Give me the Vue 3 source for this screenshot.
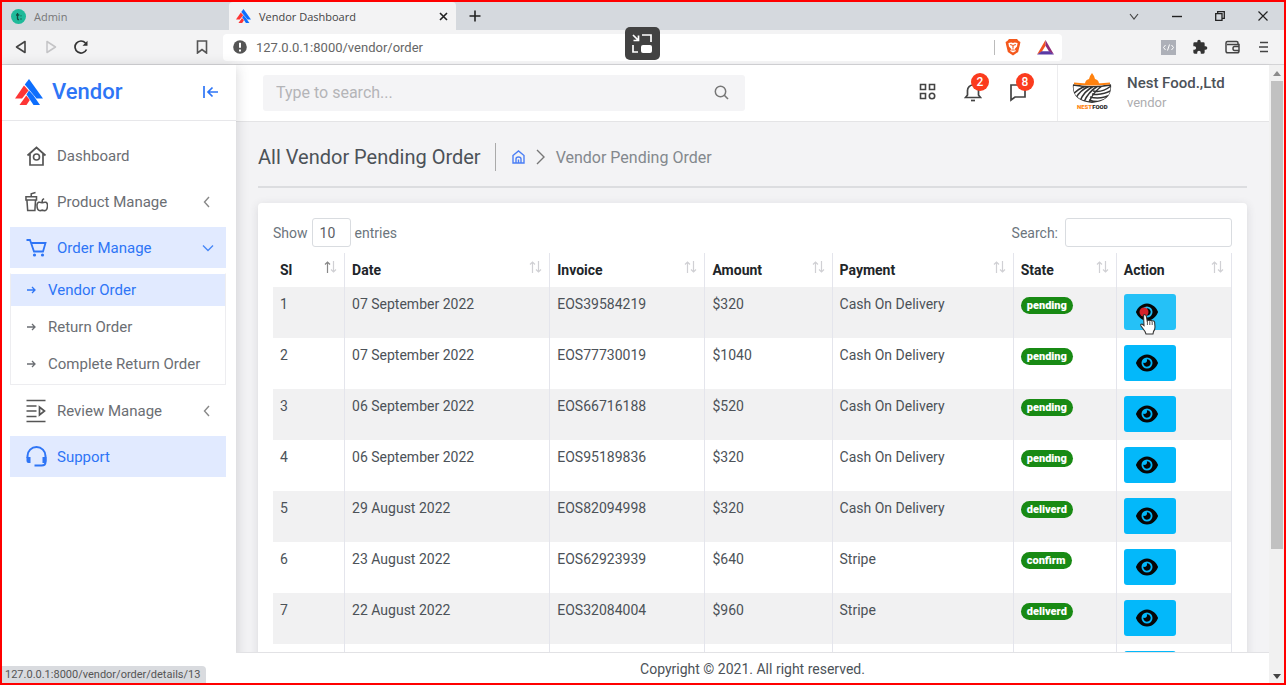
<script setup>
import { ref } from 'vue'

const query = ref('')
const filter = ref('')
const pageSize = ref('10')
const url = ref('127.0.0.1:8000/vendor/order')

const columns = [
  { label: 'Sl', width: 72 },
  { label: 'Date', width: 205 },
  { label: 'Invoice', width: 155 },
  { label: 'Amount', width: 127 },
  { label: 'Payment', width: 181 },
  { label: 'State', width: 103 },
  { label: 'Action', width: 115 }
]
const total = columns.reduce((sum, c) => sum + c.width, 0)

const orders = [
  { date: '07 September 2022', invoice: 'EOS39584219', amount: '$320', payment: 'Cash On Delivery', state: 'pending' },
  { date: '07 September 2022', invoice: 'EOS77730019', amount: '$1040', payment: 'Cash On Delivery', state: 'pending' },
  { date: '06 September 2022', invoice: 'EOS66716188', amount: '$520', payment: 'Cash On Delivery', state: 'pending' },
  { date: '06 September 2022', invoice: 'EOS95189836', amount: '$320', payment: 'Cash On Delivery', state: 'pending' },
  { date: '29 August 2022', invoice: 'EOS82094998', amount: '$320', payment: 'Cash On Delivery', state: 'deliverd' },
  { date: '23 August 2022', invoice: 'EOS62923939', amount: '$640', payment: 'Stripe', state: 'confirm' },
  { date: '22 August 2022', invoice: 'EOS32084004', amount: '$960', payment: 'Stripe', state: 'deliverd' },
  { date: '', invoice: '', amount: '', payment: '', state: '' }
]
</script>

<template>
  <div class="window">
    <svg class="defs" width="0" height="0" aria-hidden="true">
      <symbol id="brand" viewBox="0 0 28 26">
        <path fill="#0d6efd" d="M14 0 28 19.500H21.500L9.800 5.500Z" />
        <path fill="#0d6efd" d="M14 11.500 18.500 16.500 25 26H18.500L11.500 15.500Z" />
        <path fill="#fd3535" d="M9 6.500 13.500 11.500 7 19.500H0Z" />
        <path fill="#fd3535" d="M11.300 16.500 14.800 21 11.500 26H4.500Z" />
      </symbol>
      <symbol id="eye" viewBox="0 0 576 512">
        <path fill="#060606" d="M288 32c-80.800 0-145.500 36.800-192.600 80.600C48.600 156 17.300 208 2.500 243.700c-3.300 7.900-3.300 16.700 0 24.600C17.300 304 48.600 356 95.400 399.400C142.500 443.200 207.200 480 288 480s145.500-36.800 192.600-80.600c46.800-43.500 78.100-95.400 93-131.100c3.300-7.900 3.300-16.700 0-24.600c-14.900-35.700-46.200-87.700-93-131.100C433.500 68.800 368.800 32 288 32zM144 256a144 144 0 1 1 288 0 144 144 0 1 1 -288 0zm144-64c0 35.300-28.700 64-64 64c-7.100 0-13.900-1.200-20.300-3.300c-5.500-1.800-11.900 1.600-11.700 7.400c.3 6.900 1.300 13.800 3.200 20.700c13.700 51.200 66.400 81.600 117.600 67.900s81.600-66.400 67.900-117.600c-11.100-41.500-47.800-69.400-88.600-71.100c-5.800-.2-9.200 6.100-7.400 11.700c2.100 6.400 3.300 13.200 3.300 20.300z" />
      </symbol>
    </svg>

    <div class="tabs">
      <button class="tab">
        <svg width="15" height="15" viewBox="0 0 15 15"><circle cx="7.500" cy="7.500" r="7.500" fill="#1fba9a" /><path d="M6.500 4v5.500q0 1.300 1.500 1M5 6h3.300M10 6.500v.8M10 9.500v1" fill="none" stroke="#124b40" stroke-width="1.300" /></svg>
        <span>Admin</span>
      </button>
      <button class="tab current">
        <svg width="15" height="14"><use href="#brand" /></svg>
        <span>Vendor Dashboard</span>
        <svg class="close" width="9" height="9" viewBox="0 0 9 9"><path d="M1 1l7 7M8 1 1 8" stroke="#222" stroke-width="1.600" /></svg>
      </button>
      <button class="plus" aria-label="New tab"><svg width="12" height="12" viewBox="0 0 12 12"><path d="M6 .5v11M.5 6h11" stroke="#222" stroke-width="1.600" /></svg></button>
      <div class="controls">
        <button aria-label="Search tabs"><svg width="10" height="7" viewBox="0 0 10 7"><path d="M1 1l4 5 4-5" fill="none" stroke="#444" stroke-width="1.200" /></svg></button>
        <button aria-label="Minimize"><svg width="10" height="10" viewBox="0 0 10 10"><path d="M0 5.500h10" stroke="#222" stroke-width="1.400" /></svg></button>
        <button aria-label="Restore"><svg width="10" height="10" viewBox="0 0 10 10"><path d="M.7 2.700h6.300v6.600H.7zM2.700 2.500V.7h6.600v6.600H7" fill="none" stroke="#222" stroke-width="1.300" /></svg></button>
        <button aria-label="Close"><svg width="10" height="10" viewBox="0 0 10 10"><path d="M.5.5l9 9M9.500.5l-9 9" stroke="#222" stroke-width="1.200" /></svg></button>
      </div>
    </div>

    <div class="toolbar">
      <div class="history">
        <button aria-label="Back"><svg width="12" height="14" viewBox="0 0 12 14"><path d="M10 1.500v11L1.500 7Z" fill="none" stroke="#444" stroke-width="1.600" stroke-linejoin="round" /></svg></button>
        <button aria-label="Forward"><svg width="12" height="14" viewBox="0 0 12 14"><path d="M2 1.500v11L10.500 7Z" fill="none" stroke="#c4c4c6" stroke-width="1.500" stroke-linejoin="round" /></svg></button>
        <button aria-label="Reload"><svg width="14" height="14" viewBox="0 0 14 14"><path d="M12.500 9.500A6 6 0 1 1 11.500 3" fill="none" stroke="#333" stroke-width="1.700" /><path d="M13.500.8v5H8.500Z" fill="#333" /></svg></button>
      </div>
      <button class="bookmark" aria-label="Bookmark"><svg width="12" height="14" viewBox="0 0 12 14"><path d="M1.500 1h9v12L6 9.500 1.500 13Z" fill="none" stroke="#555" stroke-width="1.600" /></svg></button>
      <div class="address">
        <svg width="14" height="14" viewBox="0 0 14 14"><circle cx="7" cy="7" r="6.800" fill="#555" /><path d="M7 2.800v5M7 9.500v2" stroke="#fff" stroke-width="2" /></svg>
        <input v-model="url" aria-label="Address">
        <span class="rule"></span>
        <svg width="16" height="18" viewBox="0 0 14 18" preserveAspectRatio="none"><path d="M3.500 1h7l1.500 2 1.500 1-.5 3-1.500 7L7 17.500 2.500 14 1 7 .5 4 2 3Z" fill="#f4581c" /><path d="M3 5l2.500-.5L7 5l1.500-.5L11 5l-.5 3.500L8.500 11 9.500 13 7 14.500 4.500 13l1-2L3.500 8.500Z" fill="#fff" /><path d="M4.500 6.500l2 .8M9.500 6.500l-2 .8M7 7v3.500M5.500 12h3" stroke="#f4581c" fill="none" /></svg>
        <svg width="17" height="15" viewBox="0 0 18 16"><path d="M9 0 0 15.500 5 12.500 9 6Z" fill="#f4501f" /><path d="M9 0l9 15.500L13 12.500 9 6Z" fill="#8f2b78" /><path d="M0 15.500h18L13 12H5Z" fill="#5a3aa5" /></svg>
      </div>
      <div class="extras">
        <button aria-label="Developer"><svg width="15" height="15" viewBox="0 0 15 15"><path d="M0 0h15v15H0z" fill="#adb0b8" /><path d="M4.500 5 2.500 7.500l2 2.500M10.500 5l2 2.500-2 2.500M8.500 4.500l-2 6" fill="none" stroke="#fff" /></svg></button>
        <button aria-label="Extensions"><svg width="16" height="16" viewBox="0 0 24 24"><path fill="#333" d="M20.500 11H19V7a2 2 0 0 0-2-2h-4V3.500a2.500 2.500 0 0 0-5 0V5H4a2 2 0 0 0-2 2v3.800h1.500a2.700 2.700 0 0 1 0 5.400H2V20a2 2 0 0 0 2 2h3.800v-1.500a2.700 2.700 0 0 1 5.400 0V22H17a2 2 0 0 0 2-2v-4h1.500a2.500 2.500 0 0 0 0-5Z" /></svg></button>
        <button aria-label="Wallet"><svg width="15" height="14" viewBox="0 0 15 14"><path d="M13 4V3q0-1.500-1.500-1.500h-9Q1 1.500 1 3v8q0 1.800 1.800 1.800h9.400q1.800 0 1.800-1.800V4.500H2M14 6.500H9.500Q8 6.500 8 8.500t1.500 2H14" fill="none" stroke="#444" stroke-width="1.500" /></svg></button>
        <button aria-label="Menu"><svg width="10" height="12" viewBox="0 0 10 12"><path d="M1 1.500h8M0 6h9M1 10.500h8" stroke="#444" stroke-width="1.600" /></svg></button>
      </div>
    </div>

    <div class="page">
      <aside class="sidebar">
        <div class="brand">
          <svg width="28" height="26"><use href="#brand" /></svg>
          <strong>Vendor</strong>
          <button aria-label="Collapse menu"><svg width="15" height="12" viewBox="0 0 15 12"><path d="M1 0v12M15 6H5M9.500 1.500 5 6l4.500 4.500" fill="none" stroke="#2e75f6" stroke-width="1.700" /></svg></button>
        </div>
        <nav class="menu">
          <a href="#dashboard"><svg width="22" height="22" viewBox="0 0 22 22"><path d="M2 10.500 11 2.500l9 8M4.500 9v11h13V9" fill="none" stroke="#555" stroke-width="1.700" /><circle cx="11" cy="12" r="3" fill="none" stroke="#555" stroke-width="1.600" /></svg><span>Dashboard</span></a>
          <a href="#products"><svg width="24" height="22" viewBox="0 0 24 22"><path d="M1 5.500h11v3.500H1ZM2 9l.8 10.800h7.500L11 9M6.500 5.500V2.500L11 1.200M18 11V9.500Q18 8 20 7.500M18 11.800q-5-2-5.500 2.200 0 6 3.300 6l2.200-.5 2.200.5q3.300 0 3.300-6-.5-4.200-5.500-2.200Z" fill="none" stroke="#555" stroke-width="1.600" /></svg><span>Product Manage</span><svg class="chev" width="8" height="12" viewBox="0 0 8 12"><path d="M5 1 0.500 6l4.500 5" fill="none" stroke="#888" stroke-width="1.400" /></svg></a>
          <a href="#orders" class="on"><svg width="22" height="22" viewBox="0 0 22 22"><path d="M1 3h3.500l4 11.500h9L20 6H5.500" fill="none" stroke="#2e75f6" stroke-width="1.800" /><circle cx="9" cy="18" r="1.600" fill="#2e75f6" /><circle cx="17" cy="18" r="1.600" fill="#2e75f6" /></svg><span>Order Manage</span><svg class="chev" width="12" height="8" viewBox="0 0 12 8"><path d="M1 1.500 6 6.500l5-5" fill="none" stroke="#4888f7" stroke-width="1.400" /></svg></a>
          <div class="submenu">
            <a v-for="(item, i) in ['Vendor Order', 'Return Order', 'Complete Return Order']" :key="item" href="#orders" :class="{ on: i === 0 }">
              <svg width="9" height="8" viewBox="0 0 9 8"><path d="M0 4h8M5 1l3 3-3 3" fill="none" stroke="currentColor" stroke-width="1.300" /></svg>
              <span>{{ item }}</span>
            </a>
          </div>
          <a href="#reviews"><svg width="22" height="24" viewBox="0 0 22 24"><path d="M1 1.500h19M1 7h10M1 12h10M1 17.500h10M1 22.500h19" stroke="#555" stroke-width="1.700" /><path d="M14 8v8l5-4Z" fill="none" stroke="#555" stroke-width="1.700" /></svg><span>Review Manage</span><svg class="chev" width="8" height="12" viewBox="0 0 8 12"><path d="M5 1 0.500 6l4.500 5" fill="none" stroke="#888" stroke-width="1.400" /></svg></a>
          <a href="#support" class="on"><svg width="22" height="22" viewBox="0 0 22 22"><path d="M2 12v-2a9 9 0 0 1 18 0v6q0 3.500-4 3.500H9" fill="none" stroke="#2e75f6" stroke-width="2" /><path d="M1 11h4v6H3q-2 0-2-2ZM21 11h-4v6h2q2 0 2-2Z" fill="#2e75f6" /></svg><span>Support</span></a>
        </nav>
      </aside>

      <div class="main">
        <header class="topbar">
          <label class="search">
            <input v-model="query" type="text" placeholder="Type to search..." aria-label="Type to search">
            <svg width="15" height="15" viewBox="0 0 15 15"><circle cx="6.500" cy="6.500" r="5.200" fill="none" stroke="#777" stroke-width="1.500" /><path d="M10.300 10.300 14 14" stroke="#777" stroke-width="1.600" /></svg>
          </label>
          <div class="tools">
            <button aria-label="Apps"><svg width="17" height="17" viewBox="0 0 17 17"><g fill="none" stroke="#444" stroke-width="1.600"><path d="M1.500 1.500h5v5h-5zM10.500 1.500h5v5h-5zM1.500 10.500h5v5h-5z" /><circle cx="13" cy="13" r="2.700" /></g></svg></button>
            <button aria-label="Notifications"><svg width="18" height="20" viewBox="0 0 18 20"><path d="M1.500 15.500 3.500 13V8.500a5.500 5.500 0 0 1 11 0V13l2 2.500Z" fill="none" stroke="#444" stroke-width="1.700" /><path d="M7 18.500h4" stroke="#444" stroke-width="1.700" /></svg><b class="count">2</b></button>
            <button aria-label="Messages"><svg width="18" height="20" viewBox="0 0 18 20"><path d="M2 3h14v12H6l-4 3Z" fill="none" stroke="#444" stroke-width="1.700" /></svg><b class="count">8</b></button>
          </div>
          <div class="profile">
            <svg width="40" height="40" viewBox="0 0 40 40">
              <defs><clipPath id="bowl"><path d="M1 11Q20 15 39 11 41 28 20 30 -1 28 1 11Z" /></clipPath></defs>
              <path d="M13 11q0-4 4-5l1-3 2-3 2 3 1 3q4 1 4 5Z" fill="#ff8210" />
              <path d="M2 10.500q18 2 36 0" fill="none" stroke="#ff8210" stroke-width="1.800" />
              <g clip-path="url(#bowl)" fill="none" stroke="#333" stroke-width="1.500"><path d="M1 12Q20 15 39 12 41 28 20 29.500 -1 28 1 12ZM14 13Q5 16 1 22M18 13Q8 17 4 25M22 13Q12 18 8 28M26 13Q16 19 12 29M30 13Q20 20 17 30M21 18Q30 20 39 13M20 21Q30 23 40 17M18 24Q29 27 40 21M17 27Q28 31 38 25" /></g>
              <text x="5" y="36" class="logo-text"><tspan fill="#ff8210">NEST</tspan><tspan fill="#222">FOOD</tspan></text>
            </svg>
            <div><p class="name">Nest Food.,Ltd</p><p class="role">vendor</p></div>
          </div>
        </header>

        <main class="content">
          <div class="crumbs">
            <h1>All Vendor Pending Order</h1>
            <nav aria-label="Breadcrumb">
              <a href="#home" aria-label="Home"><svg width="13" height="14" viewBox="0 0 13 14"><path d="M1 5.500 6.500 1 12 5.500V13H1ZM4 13V9q0-2 2.500-2T9 9v4M6.500 9.500V13" fill="none" stroke="#4b7ff5" stroke-width="1.400" /></svg></a>
              <svg width="9" height="16" viewBox="0 0 9 16"><path d="M1 1l7 7-7 7" fill="none" stroke="#777" stroke-width="1.400" /></svg>
              <span>Vendor Pending Order</span>
            </nav>
          </div>
          <section class="card">
            <div class="filters">
              <label>Show <select v-model="pageSize"><option>10</option><option>25</option></select> entries</label>
              <label>Search: <input v-model="filter" type="search"></label>
            </div>
            <table>
              <colgroup><col v-for="c in columns" :key="c.label" :style="{ width: (c.width / total) * 100 + '%' }"></colgroup>
              <thead>
                <tr>
                  <th v-for="(c, i) in columns" :key="c.label" scope="col">
                    <button>
                      {{ c.label }}
                      <svg width="13" height="12" viewBox="0 0 13 12"><path d="M3.500 12V1M1 3.500 3.500 1 6 3.500" fill="none" :stroke="i === 0 ? '#888' : '#d0d0d4'" stroke-width="1.200" /><path d="M9.500 0v11M7 8.500 9.500 11 12 8.500" fill="none" stroke="#d0d0d4" stroke-width="1.200" /></svg>
                    </button>
                  </th>
                </tr>
              </thead>
              <tbody>
                <tr v-for="(o, i) in orders" :key="i">
                  <td>{{ o.date ? i + 1 : '' }}</td>
                  <td>{{ o.date }}</td>
                  <td>{{ o.invoice }}</td>
                  <td>{{ o.amount }}</td>
                  <td>{{ o.payment }}</td>
                  <td><span v-if="o.state" class="state">{{ o.state }}</span></td>
                  <td>
                    <a class="view" :class="{ hover: i === 0 }" href="#details" aria-label="View order">
                      <svg width="22" height="20"><use href="#eye" /></svg>
                      <svg v-if="i === 0" class="pointer" width="20" height="30" viewBox="0 0 20 30"><circle cx="5" cy="5" r="4.500" fill="#d4222a" /><path d="M4.500 8q1.700-1 2.700.8l1 5q1-1 2.300 0 1.500-1 2.500.3 2-.8 2.600 1L16 20q0 3-1.500 4.500L14 27H7l-1-2.500-4-5.500q-1-2 1-2l2 1.500Z" fill="#fff" stroke="#333" stroke-width="1.100" /><path d="M8.400 14v4M10.800 14.500V18M13.200 15v3" stroke="#555" /></svg>
                    </a>
                  </td>
                </tr>
              </tbody>
            </table>
          </section>
        </main>

        <footer>Copyright © 2021. All right reserved.</footer>
      </div>

      <div class="scrollbar" aria-hidden="true">
        <svg width="8" height="5" viewBox="0 0 8 5"><path d="M0 5 4 0l4 5Z" fill="#8b8b8b" /></svg>
        <span class="thumb"></span>
        <svg width="8" height="5" viewBox="0 0 8 5"><path d="M0 0h8L4 5Z" fill="#444" /></svg>
      </div>
    </div>

    <div class="status">127.0.0.1:8000/vendor/order/details/13</div>
    <button class="pip" aria-label="Picture in picture"><svg width="21" height="20" viewBox="0 0 21 20"><path d="M1 1l5 5M6.500 1.500V6.500H1.500M10 1h9v7M1 11v7h5" fill="none" stroke="#fff" stroke-width="1.700" /><rect x="9" y="11" width="11" height="8" rx="2" fill="#fff" /></svg></button>
  </div>
</template>

<style>
body { margin: 0; }
</style>

<style scoped>
* { box-sizing: border-box; }
button { border: 0; padding: 0; background: none; font: inherit; color: inherit; display: flex; align-items: center; justify-content: center; }
a { color: inherit; text-decoration: none; }
svg { flex: none; }
.defs { position: absolute; }
.window { position: relative; display: flex; flex-direction: column; height: 100vh; border: 2px solid #f00; overflow: hidden; font-family: Roboto, sans-serif; font-size: 15px; color: #4c5258; background: #fff; }

.tabs { display: flex; height: 28px; flex: none; background: #d5d9de; font: 11px "Open Sans", sans-serif; }
.tab { width: 227px; justify-content: flex-start; gap: 8px; padding: 0 8px 0 9px; color: #777; }
.current { background: #f3f3f4; color: #444; border-radius: 4px 4px 0 0; padding-left: 7px; }
.close { margin-left: auto; }
.plus { width: 38px; }
.controls { display: flex; margin-left: auto; }
.controls button { width: 43px; }

.toolbar { display: flex; align-items: center; height: 35px; flex: none; background: #f3f3f4; border-bottom: 1px solid #d4d4d6; padding: 0 10px 0 4px; }
.history { display: flex; }
.history button { width: 30px; }
.bookmark { width: 20px; margin-left: 96px; }
.address { flex: 1; display: flex; align-items: center; height: 27px; margin: 0 96px 0 11px; padding: 0 8px 0 10px; background: #fff; border-radius: 4px; }
.address input { flex: 1; min-width: 0; border: 0; outline: 0; padding: 0 9px; background: none; font: 13px Roboto, sans-serif; color: #666; }
.rule { width: 1px; height: 15px; margin-right: 10px; background: #bbb; }
.address svg + svg { margin-left: 16px; }
.extras { display: flex; gap: 12px; }
.extras button { width: 20px; }

.page { flex: 1; min-height: 0; display: flex; }
.sidebar { width: 234px; flex: none; z-index: 1; background: #fff; box-shadow: 0 2px 12px rgba(60, 60, 70, .22); }
.brand { display: flex; align-items: center; height: 56px; padding: 0 18px 2px 13px; border-bottom: 1px solid #e7e7ea; color: #2e75f6; }
.brand strong { margin-left: 9px; font-size: 22px; font-weight: 500; }
.brand button { margin-left: auto; }
.menu { display: flex; flex-direction: column; gap: 5px; padding: 14px 10px 0 8px; color: #6b6e73; }
.menu > a { display: flex; align-items: center; height: 41px; padding: 0 12px 0 15px; }
.menu > a span { margin-left: 9px; }
.menu > a > svg:first-child { width: 23px; }
.menu .on { color: #2e75f6; background: #e1eaff; }
.chev { width: 12px; margin-left: auto; }
.submenu { display: flex; flex-direction: column; gap: 5px; border: 1px solid #ededf0; border-top-color: #fff; padding-bottom: 4px; }
.submenu a { display: flex; align-items: center; gap: 12px; height: 32px; padding-left: 16px; }

.main { flex: 1; min-width: 0; display: flex; flex-direction: column; }
.topbar { display: flex; height: 57px; flex: none; background: #fff; padding-left: 27px; border-bottom: 1px solid #e4e4e6; box-shadow: 0 1px 4px rgba(60, 60, 70, .14); }
.search { flex: 0 1 482px; display: flex; align-items: center; height: 36px; margin-top: 10px; padding: 0 16px 2px 13px; border-radius: 3px; background: #f4f4f6; }
.search input { flex: 1; min-width: 0; border: 0; outline: 0; padding: 0; background: none; font: 16px Roboto, sans-serif; }
.search input::placeholder { color: #b4b5b8; }
.tools { display: flex; margin: 0 17px 0 auto; padding-bottom: 3px; }
.tools button { position: relative; width: 45px; }
.count { position: absolute; top: 8px; right: 6px; width: 18px; height: 18px; border-radius: 50%; background: #fb3b1e; color: #fff; font-size: 12px; line-height: 18px; font-weight: 500; text-align: center; }
.profile { flex: 0 0 212px; display: flex; align-items: center; gap: 15px; padding-left: 14px; border-left: 1px solid #ececee; }
.profile p { margin: 0; line-height: 19px; }
.name { font-weight: 500; font-size: 15px; }
.role { font-size: 13px; color: #adadb0; }
.logo-text { font: 900 6px Roboto, sans-serif; }

.content { flex: 1; min-height: 0; overflow: hidden; padding: 14px 22px 0; background: #f3f3f5; }
.crumbs { display: flex; align-items: center; height: 52px; border-bottom: 2px solid #dcdde0; padding-bottom: 8px; }
.crumbs h1 { margin: 0; padding-right: 14px; font-size: 20px; font-weight: 400; line-height: 28px; color: #4c5258; border-right: 1px solid #aaa; }
.crumbs nav { display: flex; align-items: center; gap: 11px; padding-left: 16px; color: #83888d; font-size: 16px; }
.crumbs a { display: flex; }
.card { margin-top: 15px; padding: 15px; border-radius: 4px; background: #fff; box-shadow: 0 2px 10px rgba(60, 60, 70, .14); }
.filters { display: flex; justify-content: space-between; height: 29px; margin-bottom: 6px; color: #6c757d; font-size: 14px; }
.filters label { display: flex; align-items: center; gap: 4px; }
.filters select { appearance: none; width: 39px; height: 29px; padding: 0 7px; border: 1px solid #d9dce0; border-radius: 3px; background: #fff; color: #5c6066; font: 14px Roboto, sans-serif; }
.filters input { appearance: none; width: 167px; height: 29px; margin-left: 3px; border: 1px solid #d9dce0; border-radius: 3px; background: #fff; }
table { width: 100%; table-layout: fixed; border-collapse: separate; border-spacing: 0; }
th, td { padding: 7px; border-right: 1px solid #e4e5ec; text-align: left; vertical-align: top; line-height: 20px; }
th { height: 34px; color: #212529; }
th button { width: 100%; justify-content: space-between; font-size: 14px; font-weight: 700; }
th svg { margin-bottom: 6px; }
td { height: 51px; font-size: 14px; }
tbody tr:nth-child(odd) { background: #f1f1f2; }
.state { display: inline-block; padding: 0 6px; height: 17px; margin-top: 3px; border-radius: 9px; background: #188a14; color: #fff; font-size: 11px; font-weight: 900; line-height: 17px; vertical-align: top; }
.view { position: relative; display: flex; align-items: center; width: 52px; height: 36px; padding-left: 12px; border-radius: 3px; background: #03b8fa; }
.hover { background: #25c1f7; }
.pointer { position: absolute; left: 15px; top: 13px; }
footer { height: 31px; flex: none; z-index: 1; display: flex; align-items: center; justify-content: center; padding-top: 2px; border-top: 1px solid #e2e2e5; background: #fff; font-size: 14px; }

.scrollbar { width: 15px; flex: none; display: flex; flex-direction: column; align-items: center; padding: 6px 0 4px; background: #f1f1f1; }
.thumb { width: 12px; height: 77%; margin: 5px 0 auto; background: #c1c1c1; }
.status { position: absolute; left: 0; bottom: 0; z-index: 2; padding: 0 6px 0 3px; border-radius: 0 4px 0 0; background: #d9dbdf; color: #555; font: 11px/17px Roboto, sans-serif; }
.pip { position: absolute; left: 623px; top: 25px; z-index: 2; width: 35px; height: 33px; border-radius: 5px; background: #424242; }
</style>
